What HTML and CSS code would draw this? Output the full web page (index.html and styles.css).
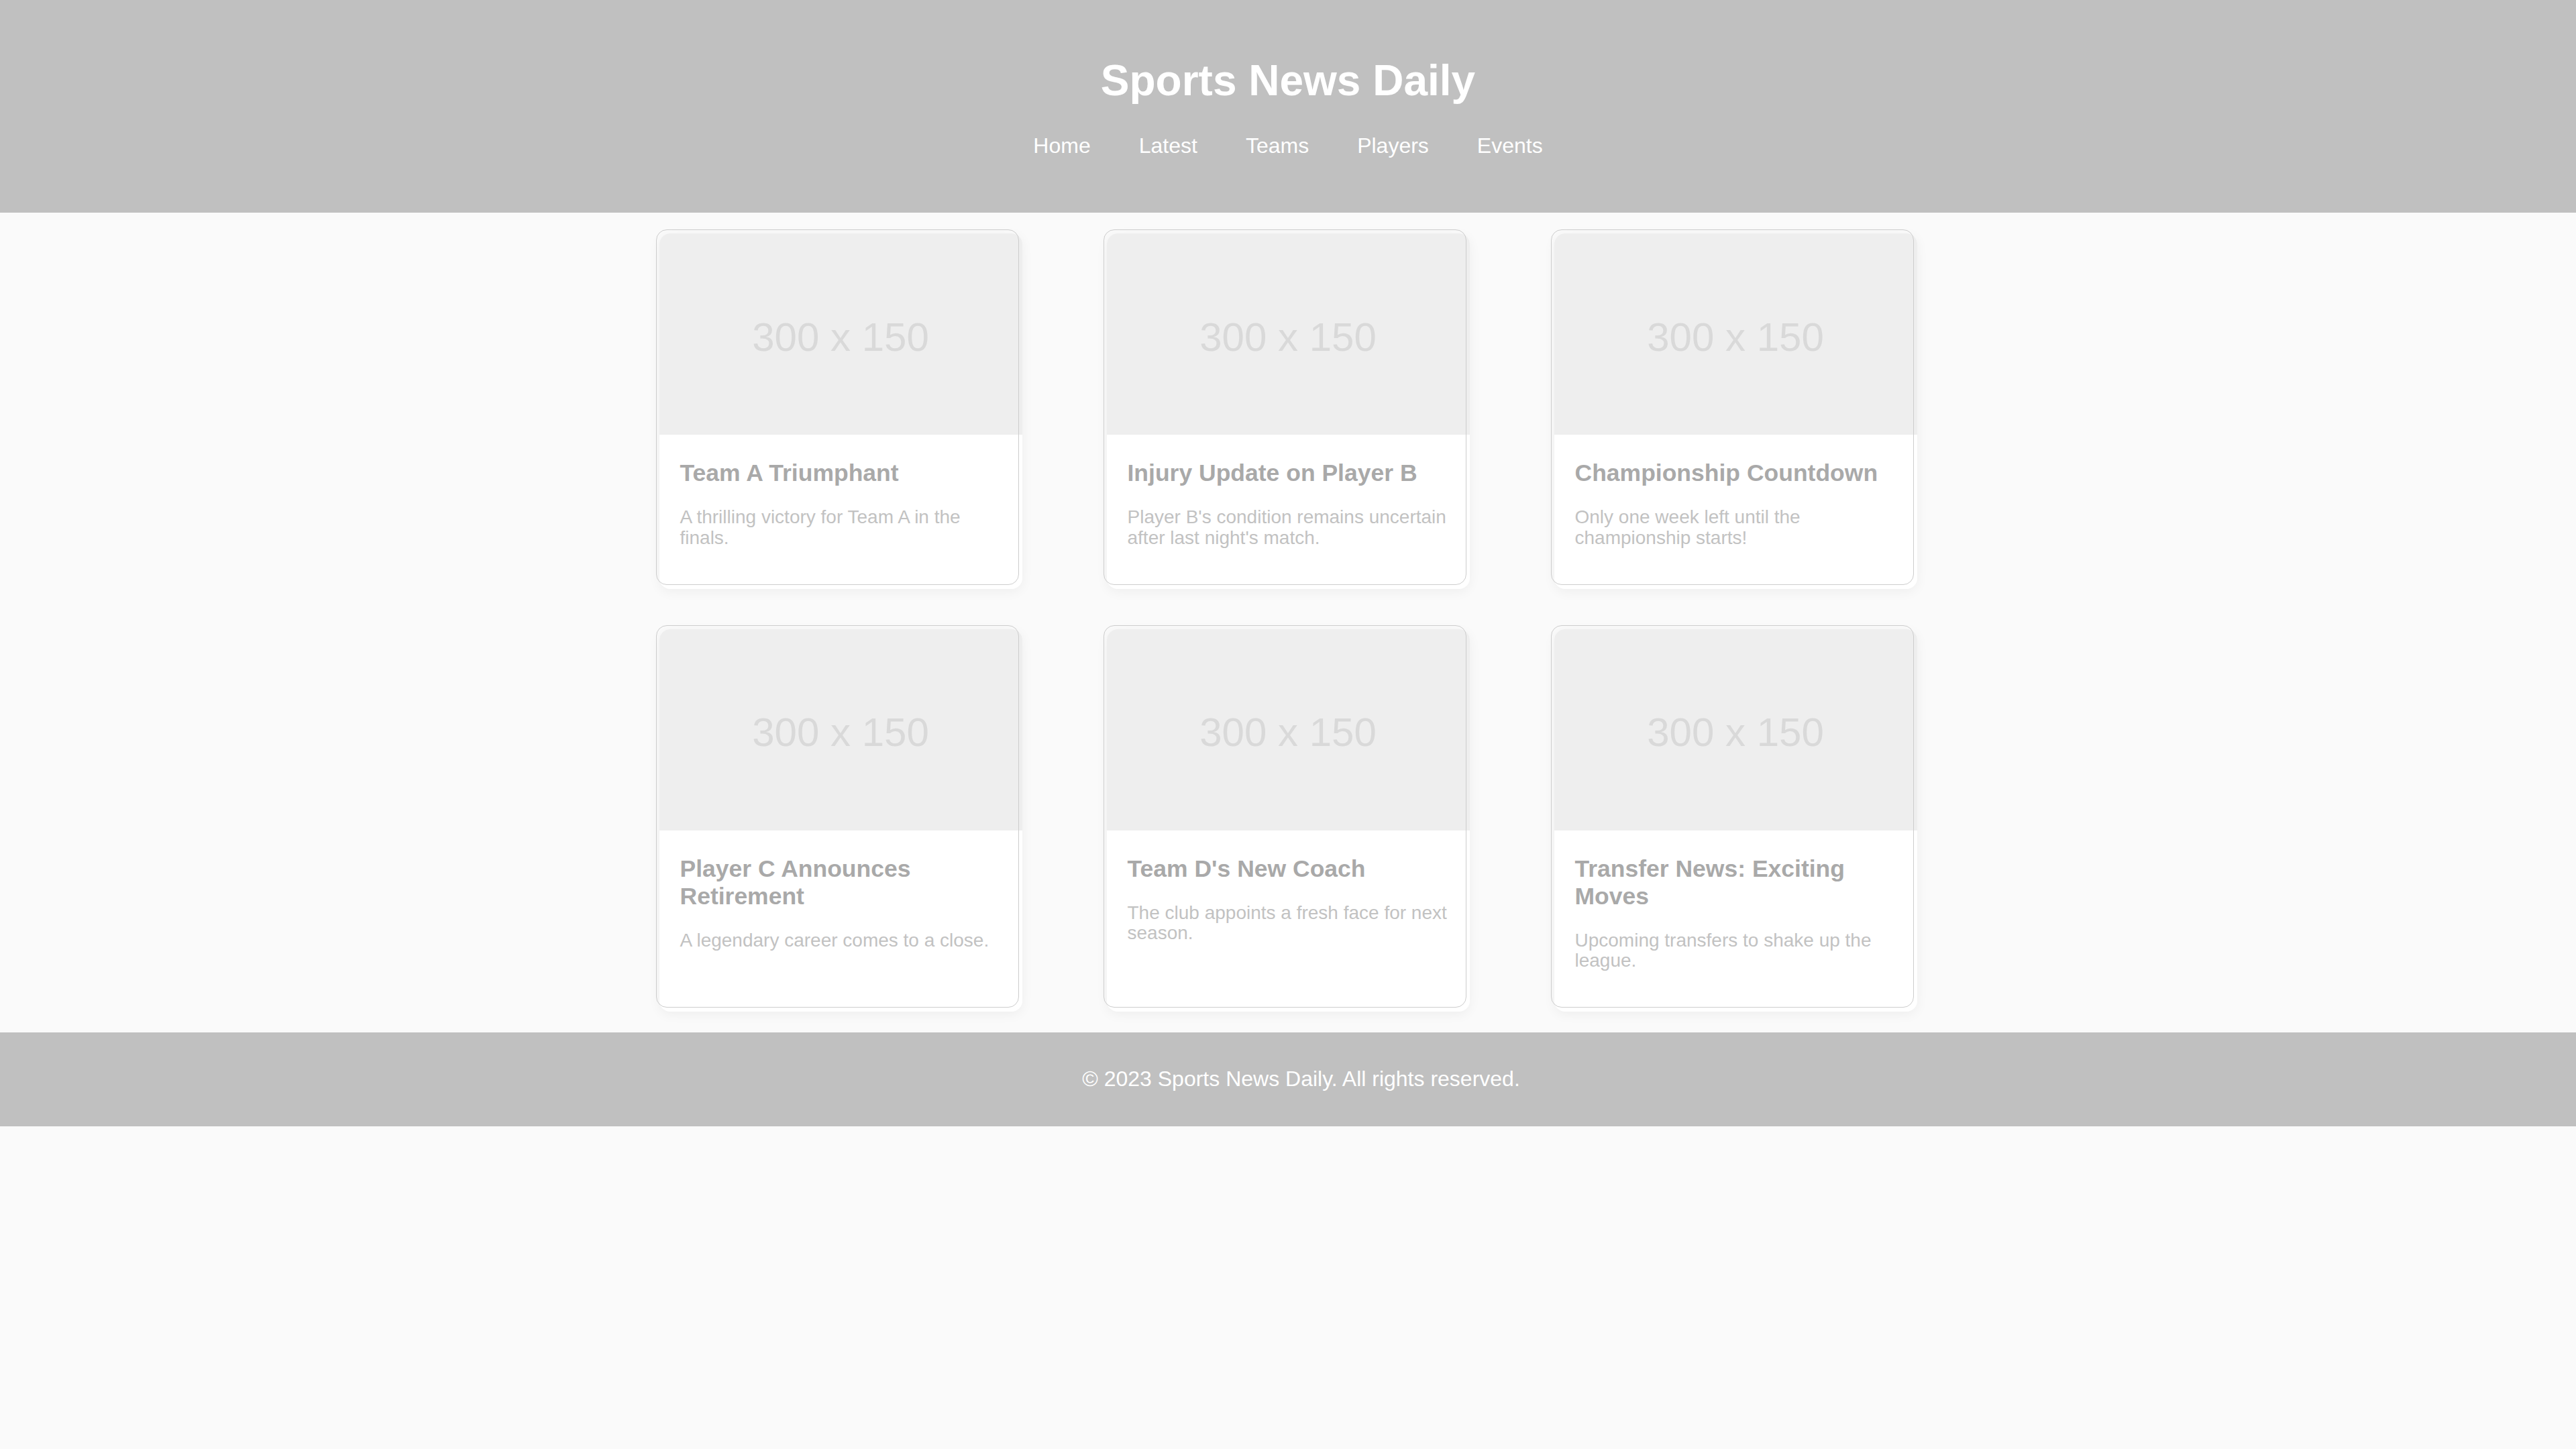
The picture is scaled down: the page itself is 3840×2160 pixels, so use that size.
FILE: index.html
```html
<!DOCTYPE html>
<html lang="en">
<head>
<meta charset="utf-8">
<title>Sports News Daily</title>
<link rel="stylesheet" href="styles.css">
</head>
<body>
<header class="site-header">
  <h1 class="site-title">Sports News Daily</h1>
  <nav class="site-nav">
    <a href="#">Home</a>
    <a href="#">Latest</a>
    <a href="#">Teams</a>
    <a href="#">Players</a>
    <a href="#">Events</a>
  </nav>
</header>
<main class="grid">
  <article class="card">
    <div class="thumb">300 x 150</div>
    <div class="card-body">
      <h3 class="card-title">Team A Triumphant</h3>
      <p class="card-text">A thrilling victory for Team A in the finals.</p>
    </div>
  </article>
  <article class="card">
    <div class="thumb">300 x 150</div>
    <div class="card-body">
      <h3 class="card-title">Injury Update on Player B</h3>
      <p class="card-text">Player B's condition remains uncertain after last night's match.</p>
    </div>
  </article>
  <article class="card">
    <div class="thumb">300 x 150</div>
    <div class="card-body">
      <h3 class="card-title">Championship Countdown</h3>
      <p class="card-text">Only one week left until the championship starts!</p>
    </div>
  </article>
  <article class="card">
    <div class="thumb">300 x 150</div>
    <div class="card-body">
      <h3 class="card-title">Player C Announces Retirement</h3>
      <p class="card-text">A legendary career comes to a close.</p>
    </div>
  </article>
  <article class="card">
    <div class="thumb">300 x 150</div>
    <div class="card-body">
      <h3 class="card-title">Team D's New Coach</h3>
      <p class="card-text">The club appoints a fresh face for next season.</p>
    </div>
  </article>
  <article class="card">
    <div class="thumb">300 x 150</div>
    <div class="card-body">
      <h3 class="card-title">Transfer News: Exciting Moves</h3>
      <p class="card-text">Upcoming transfers to shake up the league.</p>
    </div>
  </article>
</main>
<footer class="site-footer">
  <p class="footer-text">© 2023 Sports News Daily. All rights reserved.</p>
</footer>
</body>
</html>
```
FILE: styles.css
```css
html, body {
  margin: 0;
  padding: 0;
}

body {
  background: #fafafa;
  font-family: "Liberation Sans", Arial, sans-serif;
}

.site-header {
  background: #c0c0c0;
  color: #ffffff;
  text-align: center;
  padding: 83px 0 81px;
}

.site-title {
  margin: 0 0 42px;
  font-size: 64px;
  font-weight: bold;
  line-height: normal;
}

.site-nav {
  display: flex;
  justify-content: center;
  gap: 72px;
  font-size: 32px;
  line-height: normal;
}

.site-nav a {
  color: #ffffff;
  text-decoration: none;
}

.grid {
  display: grid;
  grid-template-columns: repeat(3, 541px);
  column-gap: 126px;
  row-gap: 60px;
  justify-content: center;
  padding: 31px 0;
}

.card {
  position: relative;
  background: #ffffff;
  border-radius: 16px;
  box-shadow: 0 4px 18px rgba(0, 0, 0, 0.05);
  display: flex;
  flex-direction: column;
}

.card::before {
  content: "";
  position: absolute;
  top: -6px;
  left: -5px;
  right: 5px;
  bottom: 6px;
  border: 1px solid #cdcdcd;
  border-radius: 16px;
  pointer-events: none;
}

.thumb {
  height: 300px;
  box-sizing: border-box;
  padding-top: 8px;
  background: #eeeeee;
  border-radius: 16px 16px 0 0;
  display: flex;
  align-items: center;
  justify-content: center;
  color: #d9d9d9;
  font-size: 60px;
}

.card-body {
  padding: 37px 31px 0;
}

.card-title {
  margin: 0 0 30px;
  font-size: 35.5px;
  font-weight: bold;
  line-height: normal;
  color: #a9a9a9;
}

.card-text {
  margin: 0 0 60px;
  font-size: 28px;
  line-height: 30.8px;
  color: #c2c2c2;
}

.site-footer {
  background: #c0c0c0;
  color: #ffffff;
  text-align: center;
  padding: 51px 0 52px 39px;
}

.footer-text {
  margin: 0;
  font-size: 32px;
  line-height: normal;
}
```
